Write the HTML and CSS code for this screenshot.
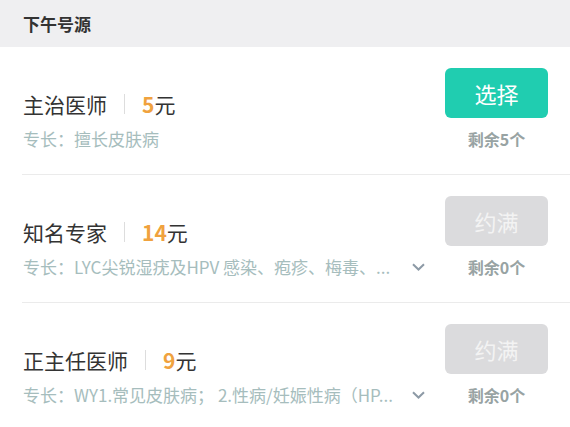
FILE: index.html
```html
<!DOCTYPE html>
<html lang="zh-CN">
<head>
    <meta charset="UTF-8">
    <meta name="viewport" content="width=device-width, initial-scale=1.0">
    <title>下午号源</title>
    <link rel="stylesheet" href="styles.css">
</head>
<body>
    <div class="section-title">下午号源</div>

    <div class="slot">
        <div class="slot-name">主治医师<span class="sep"></span><span class="price">5</span>元</div>
        <button class="btn btn-pick">选择</button>
        <div class="slot-desc">专长：擅长皮肤病</div>
        <div class="remain">剩余5个</div>
    </div>

    <div class="slot">
        <div class="slot-name">知名专家<span class="sep"></span><span class="price">14</span>元</div>
        <button class="btn btn-full">约满</button>
        <div class="slot-desc">
            <span class="desc-text">专长：LYC尖锐湿疣及HPV 感染、疱疹、梅毒、...</span>
            <svg class="chevron" width="13" height="8" viewBox="0 0 13 8"><path d="M1 1.2 L6.5 6.5 L12 1.2" fill="none" stroke="#8d9aa6" stroke-width="2"/></svg>
        </div>
        <div class="remain">剩余0个</div>
    </div>

    <div class="slot">
        <div class="slot-name">正主任医师<span class="sep"></span><span class="price">9</span>元</div>
        <button class="btn btn-full">约满</button>
        <div class="slot-desc">
            <span class="desc-text">专长：WY1.常见皮肤病； 2.性病/妊娠性病（HP...</span>
            <svg class="chevron" width="13" height="8" viewBox="0 0 13 8"><path d="M1 1.2 L6.5 6.5 L12 1.2" fill="none" stroke="#8d9aa6" stroke-width="2"/></svg>
        </div>
        <div class="remain">剩余0个</div>
    </div>
</body>
</html>
```

FILE: styles.css
```css
body {
    margin: 0;
    padding: 0;
    background-color: #ffffff;
    font-family: "Noto Sans CJK SC", "Noto Sans", sans-serif;
    overflow: hidden;
}

.section-title {
    height: 47px;
    line-height: 47px;
    padding-left: 23px;
    background-color: #efeff1;
    color: #333333;
    font-size: 17px;
    font-weight: bold;
}

.slot {
    display: grid;
    grid-template-columns: 1fr 103px;
    grid-template-rows: 50px 22px;
    row-gap: 10px;
    column-gap: 10px;
    height: 106px;
    margin-left: 22px;
    padding: 21px 22px 0 1px;
    border-bottom: 1px solid #ebebeb;
}

.slot-name {
    align-self: end;
    display: flex;
    align-items: center;
    height: 30px;
    margin-bottom: -1px;
    color: #333333;
    font-size: 21px;
}

.sep {
    width: 1px;
    height: 20px;
    margin: 0 17px 0 17px;
    background-color: #dddddd;
}

.price {
    color: #f0a23e;
    font-weight: bold;
}

.btn {
    border: none;
    border-radius: 6px;
    font-family: inherit;
    font-size: 22px;
    color: #ffffff;
    width: 103px;
    height: 50px;
    padding: 0;
}

.btn-pick {
    background-color: #20cdb0;
}

.btn-full {
    background-color: #dbdbdd;
    color: #f3f3f3;
}

.slot-desc {
    display: flex;
    align-items: center;
    line-height: 22px;
    color: #a6bdbd;
    font-size: 17px;
    min-width: 0;
}

.desc-text {
    width: 375px;
    white-space: nowrap;
}

.chevron {
    margin-left: 14px;
    flex-shrink: 0;
}

.remain {
    text-align: center;
    line-height: 22px;
    color: #98a3a3;
    font-size: 16px;
    font-weight: bold;
}
```
